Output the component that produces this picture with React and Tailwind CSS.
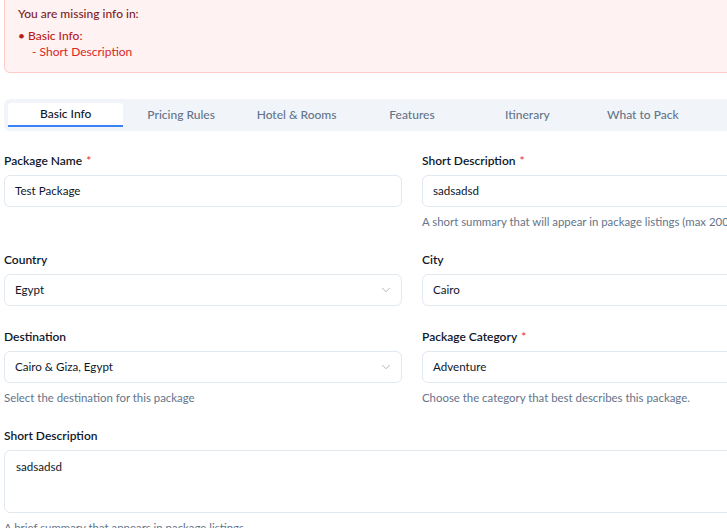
import React from 'react';
import { ChevronDown } from 'lucide-react';

const tabs = ['Basic Info', 'Pricing Rules', 'Hotel & Rooms', 'Features', 'Itinerary', 'What to Pack', 'Media'];

const Label = ({ children, required }) => (
  <label className="block text-[12px] leading-4 font-semibold text-[#0f172a] mb-[6px]">
    {children}
    {required && <span className="text-[#ef4444] ml-1">*</span>}
  </label>
);

const Help = ({ children }) => (
  <p className="mt-[8px] text-[11.4px] leading-[14px] text-[#64748b] whitespace-nowrap">{children}</p>
);

const Input = ({ value }) => (
  <div className="h-8 w-full border border-[#e2e8f0] rounded-md bg-white flex items-center px-[10px] text-[11.6px] text-[#0f172a]">
    {value}
  </div>
);

const Select = ({ value }) => (
  <div className="h-8 w-full border border-[#e2e8f0] rounded-md bg-white flex items-center justify-between pl-[10px] pr-[8px] text-[11.6px] text-[#0f172a]">
    <span>{value}</span>
    <ChevronDown className="w-[14px] h-[14px] text-[#64748b] opacity-60" strokeWidth={1.5} />
  </div>
);

export default function App() {
  return (
    <div className="w-[727px] h-[528px] overflow-hidden bg-white" style={{ fontFamily: 'Lato, "Noto Sans", sans-serif' }}>
      <div className="w-[816px] ml-[4px]">
        {/* missing info alert */}
        <div className="-mt-[11px] border border-[#fecaca] bg-[#fef2f2] rounded-md pt-[16px] pb-[12px] px-[13px]">
          <p className="text-[12px] leading-4 font-medium text-[#7f1d1d]">You are missing info in:</p>
          <ul className="mt-[6px] text-[12px] leading-4">
            <li className="text-[#b91c1c] font-medium">• Basic Info:</li>
            <li className="text-[#dc2626] pl-[14px]">- Short Description</li>
          </ul>
        </div>

        {/* tabs */}
        <div className="mt-[26px] h-8 bg-[#f1f5f9] rounded-md p-[4px] grid grid-cols-7">
          {tabs.map((t, i) => (
            <div
              key={t}
              className={`flex items-center justify-center text-[12px] font-medium whitespace-nowrap ${i === 0 ? 'bg-white text-[#0f172a] rounded-t-sm border-b-2 border-[#3b82f6]' : 'text-[#64748b]'}`}
            >
              {t}
            </div>
          ))}
        </div>

        {/* form */}
        <div className="mt-[22px] grid grid-cols-2 gap-x-[20px] gap-y-[23px]">
          <div>
            <Label required>Package Name</Label>
            <Input value="Test Package" />
          </div>
          <div>
            <Label required>Short Description</Label>
            <Input value="sadsadsd" />
            <Help>A short summary that will appear in package listings (max 200 characters)</Help>
          </div>
          <div>
            <Label>Country</Label>
            <Select value="Egypt" />
          </div>
          <div>
            <Label>City</Label>
            <Input value="Cairo" />
          </div>
          <div>
            <Label>Destination</Label>
            <Select value="Cairo & Giza, Egypt" />
            <Help>Select the destination for this package</Help>
          </div>
          <div>
            <Label required>Package Category</Label>
            <Input value="Adventure" />
            <Help>Choose the category that best describes this package.</Help>
          </div>
          <div className="col-span-2">
            <Label>Short Description</Label>
            <div className="h-[63px] w-full border border-[#e2e8f0] rounded-md bg-white px-[11px] py-[7px] text-[11.6px] text-[#0f172a]">
              sadsadsd
            </div>
            <Help>A brief summary that appears in package listings</Help>
          </div>
        </div>
      </div>
    </div>
  );
}
